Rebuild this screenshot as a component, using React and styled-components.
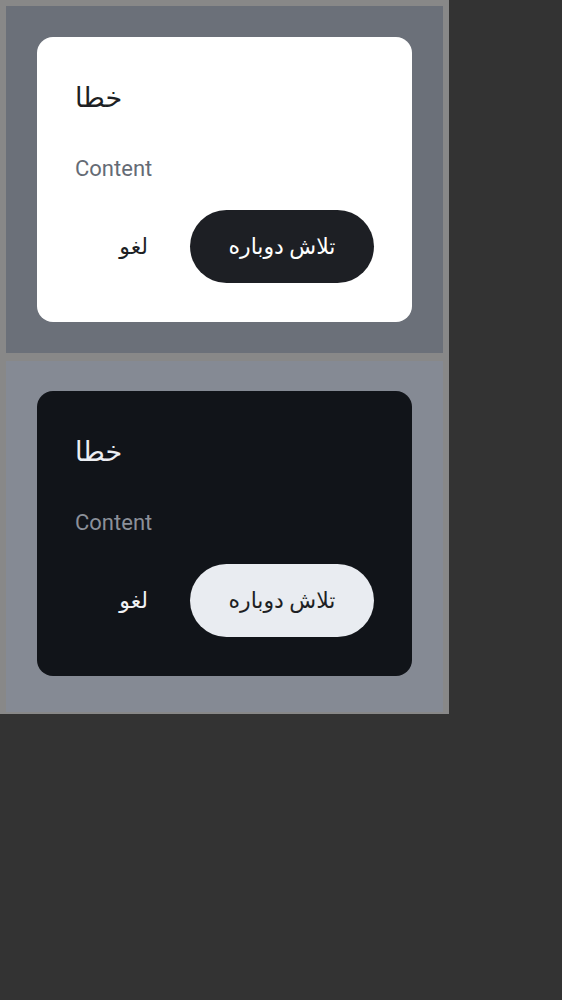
import React from 'react'
import styled, { createGlobalStyle } from 'styled-components'

const GlobalStyle = createGlobalStyle`
  html, body {
    margin: 0;
    padding: 0;
    background: #333333;
  }
  body {
    font-family: Roboto, "DejaVu Sans", sans-serif;
  }
`

const Frame = styled.div`
  width: 437px;
  padding: 6px 6px 2px;
  background: #888888;
  display: flex;
  flex-direction: column;
  gap: 8px;
`

const Surface = styled.div`
  background: ${p => (p.dark ? '#858a94' : '#6b7079')};
  padding: ${p => (p.dark ? '30px 31px 36px' : '31px')};
`

const Card = styled.div`
  background: ${p => (p.dark ? '#111419' : '#ffffff')};
  border-radius: 16px;
  padding: 43px 38px 39px;
  display: flex;
  flex-direction: column;
`

const Title = styled.h2`
  margin: 0;
  font-size: 27px;
  font-weight: 400;
  line-height: 36px;
  color: ${p => (p.dark ? '#eceef2' : '#1d1f24')};
`

const Body = styled.p`
  margin: 38px 0 0;
  font-size: 22px;
  line-height: 30px;
  color: ${p => (p.dark ? '#8b9099' : '#656b75')};
`

const Actions = styled.div`
  display: flex;
  justify-content: flex-end;
  align-items: center;
  gap: 18px;
  margin-top: 26px;
`

const TextButton = styled.button`
  border: none;
  background: transparent;
  font-family: inherit;
  font-size: 22px;
  height: 73px;
  padding: 0 24px;
  border-radius: 37px;
  color: ${p => (p.dark ? '#f1f2f5' : '#1d1f24')};
`

const FilledButton = styled.button`
  border: none;
  font-family: inherit;
  font-size: 22px;
  height: 73px;
  width: 184px;
  border-radius: 37px;
  background: ${p => (p.dark ? '#e9ecf1' : '#1d1f24')};
  color: ${p => (p.dark ? '#1d1f24' : '#ffffff')};
`

const Dialog = ({ dark }) => (
  <Surface dark={dark}>
    <Card dark={dark}>
      <Title dark={dark}>خطا</Title>
      <Body dark={dark}>Content</Body>
      <Actions>
        <TextButton dark={dark}>لغو</TextButton>
        <FilledButton dark={dark}>تلاش دوباره</FilledButton>
      </Actions>
    </Card>
  </Surface>
)

export default function App() {
  return (
    <>
      <GlobalStyle />
      <Frame>
        <Dialog />
        <Dialog dark />
      </Frame>
    </>
  )
}
